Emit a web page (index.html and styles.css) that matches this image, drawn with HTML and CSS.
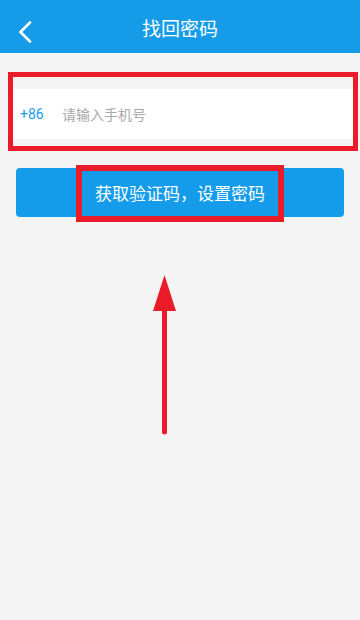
FILE: index.html
```html
<!DOCTYPE html>
<html lang="zh-CN">
<head>
    <meta charset="UTF-8">
    <meta name="viewport" content="width=device-width, initial-scale=1.0">
    <title>找回密码</title>
    <link rel="stylesheet" href="styles.css">
</head>
<body>
    <div class="topo">
        <a class="voltar" href="#">
            <svg width="14" height="22" viewBox="0 0 14 22">
                <path d="M12 1.5 L2.5 11 L12 20.5" fill="none" stroke="#fff" stroke-width="2.6" stroke-linecap="round" stroke-linejoin="round"/>
            </svg>
        </a>
        <h1>找回密码</h1>
    </div>

    <div class="marca-campo">
        <div class="campo">
            <span class="codigo">+86</span>
            <input type="text" placeholder="请输入手机号">
        </div>
    </div>

    <div class="area-botao">
        <button class="botao">获取验证码，设置密码</button>
        <div class="marca-botao"></div>
    </div>

    <div class="seta">
        <svg width="25" height="162" viewBox="0 0 25 162">
            <polygon points="12.5,0 1,36 24,36" fill="#ea1c29"/>
            <line x1="12.5" y1="34" x2="12.5" y2="157" stroke="#ea1c29" stroke-width="5" stroke-linecap="round"/>
        </svg>
    </div>
</body>
</html>
```

FILE: styles.css
```css
*{
    margin: 0;
    padding: 0;
    box-sizing: border-box;
}
body{
    background-color: #f4f4f4;
    font-family: Roboto, "Noto Sans CJK SC", sans-serif;
    height: 620px;
    overflow: hidden;
}
.topo{
    position: relative;
    height: 54px;
    background-color: #169be9;
    border-bottom: 1px solid #f9f9f9;
    display: flex;
    align-items: center;
    justify-content: center;
}
.topo h1{
    color: white;
    font-size: 19px;
    font-weight: normal;
    margin-top: 2px;
}
.voltar{
    position: absolute;
    left: 18px;
    top: 21px;
    display: flex;
}
.marca-campo{
    margin: 18px 2px 0 8px;
    border: 5px solid #ea1c29;
    padding: 12px 0 7px 0;
}
.campo{
    height: 50px;
    background-color: white;
    display: flex;
    align-items: center;
    padding-left: 7px;
}
.codigo{
    color: #1a9be8;
    font-size: 14px;
    width: 42px;
}
.campo input{
    border: none;
    outline: none;
    flex: 1;
    font-size: 14px;
    font-family: "Noto Sans CJK SC", sans-serif;
    color: #333;
    background: transparent;
}
.campo input::placeholder{
    color: #a9a9a9;
}
.area-botao{
    position: relative;
    margin: 17px 16px 0 16px;
}
.botao{
    width: 100%;
    height: 49px;
    border: none;
    border-radius: 4px;
    background-color: #149ceb;
    color: white;
    font-size: 17px;
    font-family: "Noto Sans CJK SC", sans-serif;
    cursor: pointer;
}
.marca-botao{
    position: absolute;
    left: 60px;
    top: -3px;
    width: 208px;
    height: 57px;
    border: 6px solid #ea1c29;
    pointer-events: none;
}
.seta{
    margin: 58px 0 0 152px;
    display: flex;
}
```
